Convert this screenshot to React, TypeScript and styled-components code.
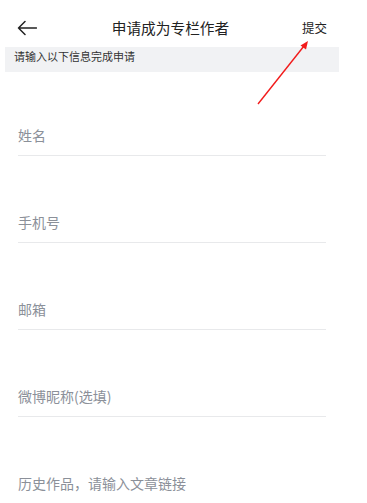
import React from 'react';
import styled, { createGlobalStyle } from 'styled-components';

const GlobalStyle = createGlobalStyle`
  html, body {
    margin: 0;
    padding: 0;
    background: #fff;
  }
  body {
    font-family: "Noto Sans CJK SC", "Noto Sans", sans-serif;
  }
`;

const Screen = styled.div`
  position: relative;
  width: 344px;
  height: 503px;
  overflow: hidden;
  background: #fff;
`;

const Header = styled.div`
  display: grid;
  grid-template-columns: 1fr auto 1fr;
  align-items: center;
  height: 39px;
  margin-top: 8px;
  padding: 0 17px 0 17px;
`;

const BackButton = styled.div`
  display: flex;
  align-items: center;
  justify-self: start;
  cursor: pointer;
`;

const Title = styled.div`
  font-size: 14.7px;
  font-weight: 400;
  color: #222;
  margin-left: -3px;
`;

const Submit = styled.div`
  justify-self: end;
  font-size: 12.5px;
  color: #222;
  cursor: pointer;
`;

const Notice = styled.div`
  margin: 0 5px;
  height: 25px;
  padding: 2px 9px 0;
  box-sizing: border-box;
  background: #f1f2f4;
  font-size: 11px;
  line-height: 14px;
  color: #333;
`;

const Form = styled.div`
  display: flex;
  flex-direction: column;
  gap: 3px;
`;

const Field = styled.div`
  margin: 0 18px;
  padding: 53px 0 10px;
  border-bottom: 1px solid #e8e9eb;
`;

const Label = styled.span`
  display: block;
  font-size: 14px;
  line-height: 20px;
  color: #8b9099;
`;

const Pointer = styled.svg`
  position: absolute;
  left: 0;
  top: 0;
  pointer-events: none;
`;

const FIELDS = ['姓名', '手机号', '邮箱', '微博昵称(选填)', '历史作品，请输入文章链接'];

const App = () => {
  return (
    <>
      <GlobalStyle />
      <Screen>
        <Header>
          <BackButton>
            <svg width="20" height="16" viewBox="0 0 20 16" fill="none">
              <path d="M1.5 8H19.5M8 1.5L1.5 8L8 14.5" stroke="#222" strokeWidth="1.5" strokeLinecap="round" strokeLinejoin="round" />
            </svg>
          </BackButton>
          <Title>申请成为专栏作者</Title>
          <Submit>提交</Submit>
        </Header>
        <Notice>请输入以下信息完成申请</Notice>
        <Form>
          {FIELDS.map((v) => (
            <Field key={v}>
              <Label>{v}</Label>
            </Field>
          ))}
        </Form>
        {/* red annotation arrow pointing at 提交 */}
        <Pointer width="344" height="120" viewBox="0 0 344 120">
          <line x1="258" y1="104" x2="304" y2="46" stroke="#f21b1b" strokeWidth="1.4" />
          <polygon points="308,41 300.5,45.5 306,49.5" fill="#f21b1b" />
        </Pointer>
      </Screen>
    </>
  );
};

export default App;
